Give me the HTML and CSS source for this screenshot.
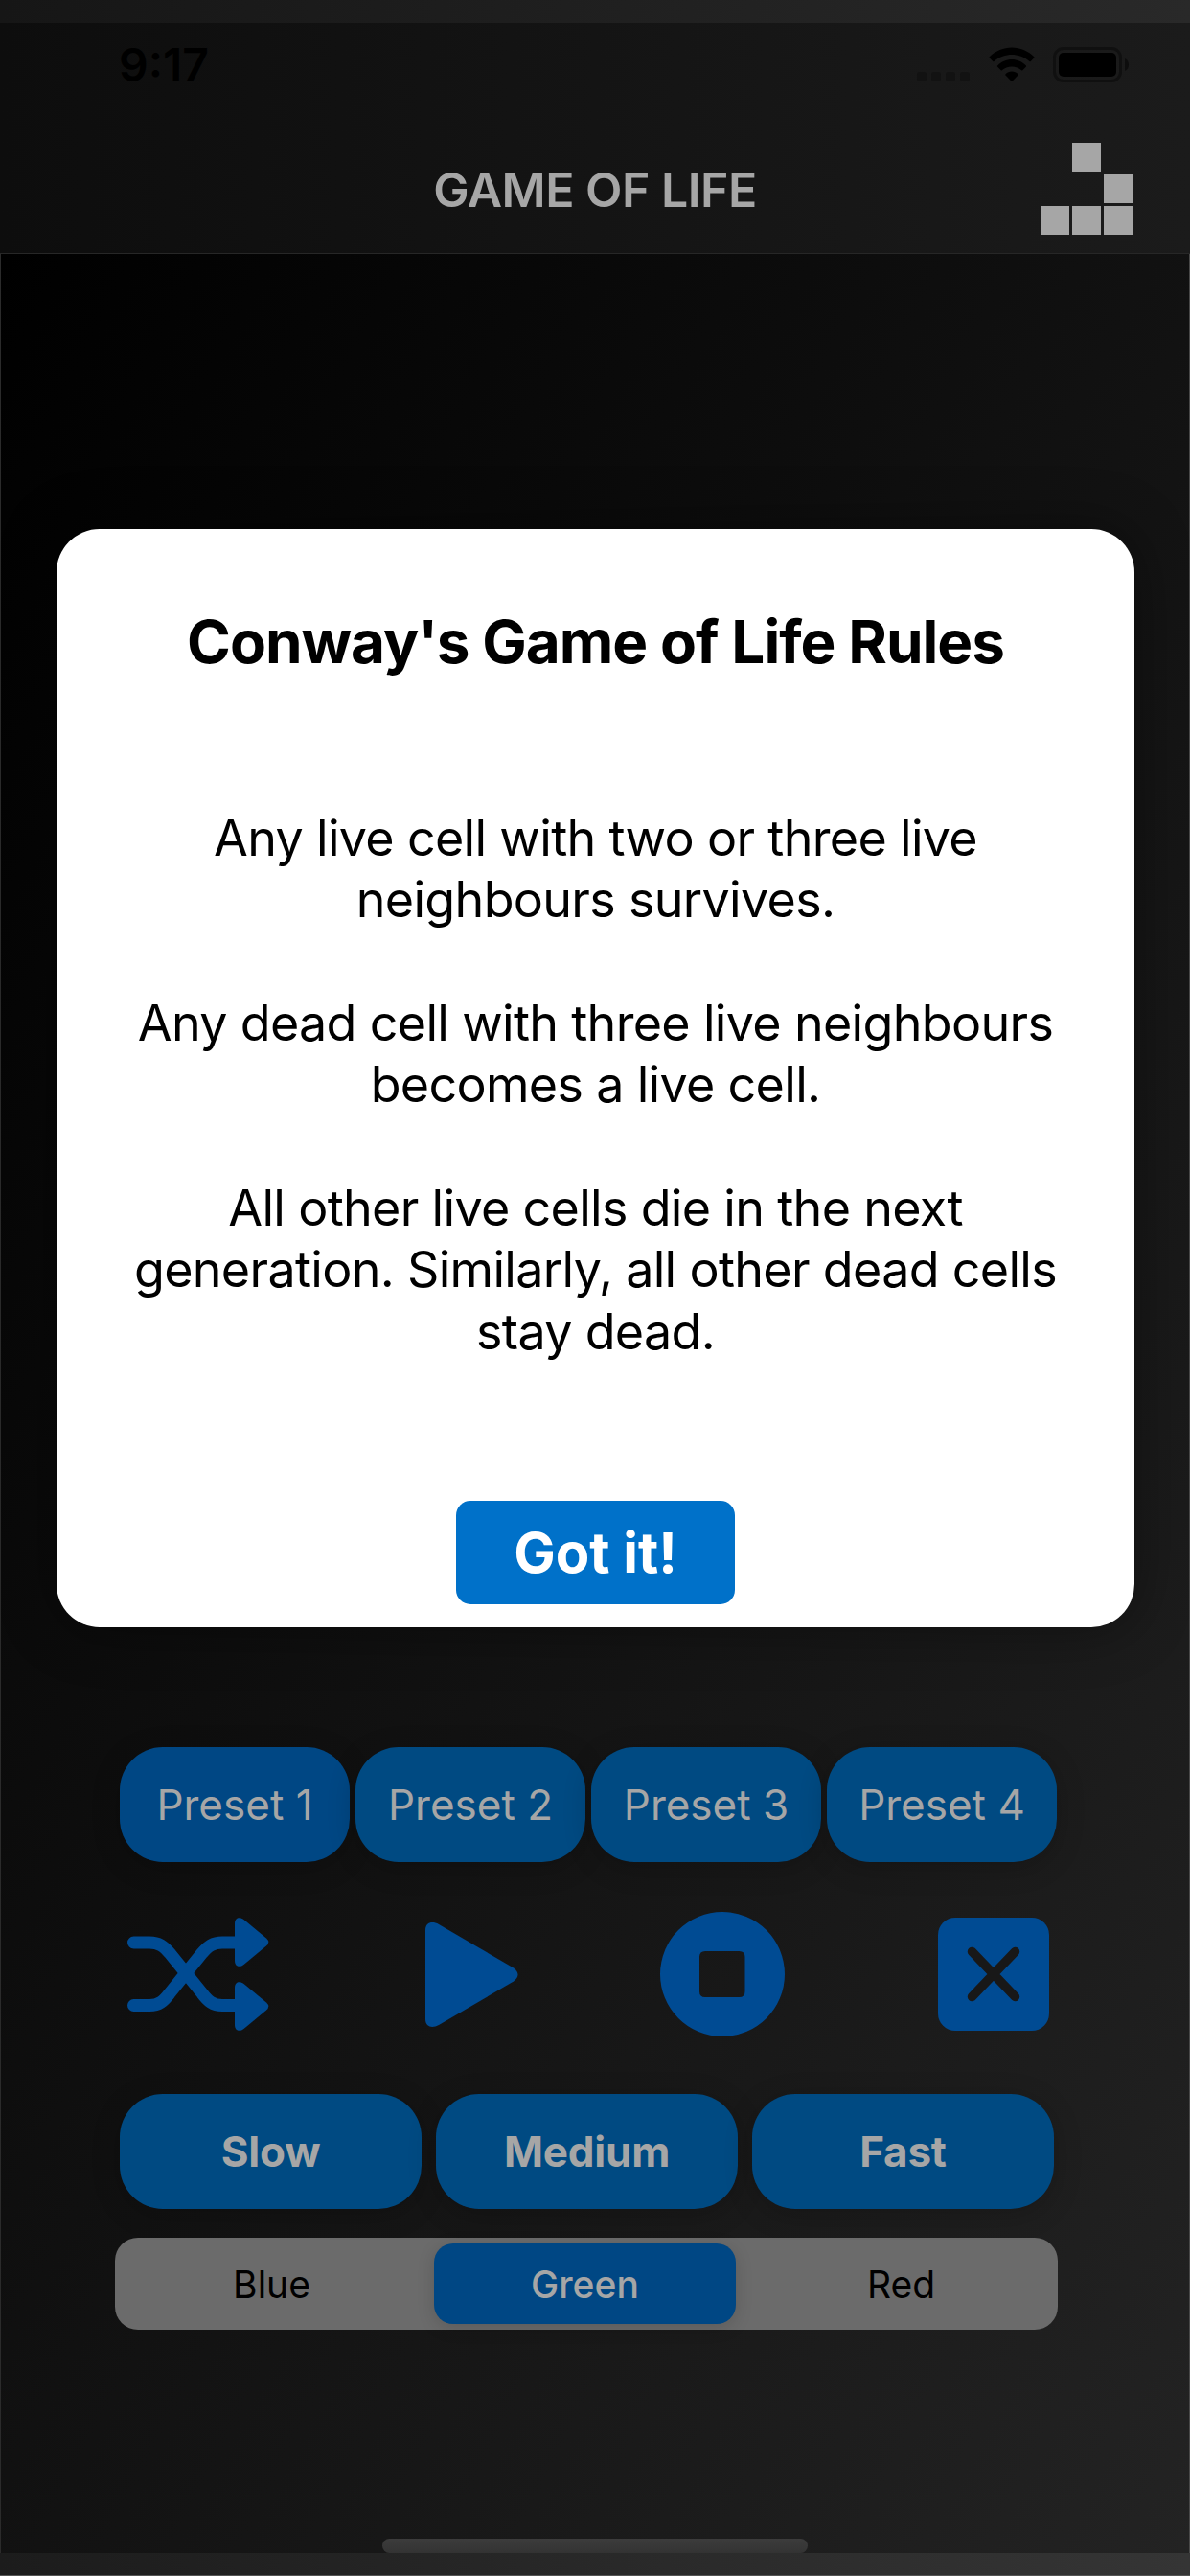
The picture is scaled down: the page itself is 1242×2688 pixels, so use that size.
FILE: index.html
```html
<!DOCTYPE html>
<html lang="en">
<head>
<meta charset="utf-8">
<title>Game of Life</title>
<link rel="stylesheet" href="styles.css">
</head>
<body>
<div class="screen">
  <div class="edge edge-top"></div>
  <header class="header">
    <div class="status">
      <span class="time">9:17</span>
      <div class="status-icons">
        <svg class="signal" viewBox="0 0 55 10"><rect width="10" height="10" rx="3"/><rect x="15" width="10" height="10" rx="3"/><rect x="30" width="10" height="10" rx="3"/><rect x="45" width="10" height="10" rx="3"/></svg>
        <svg class="wifi" viewBox="0 0 48 37"><path d="M24 8C30 8 37.500 10.500 42.700 15.200Q43.300 15.500 43.800 15L47.300 11.300Q47.800 10.700 47.300 10.200C41 4 32.500 .5 24 .5S7 4 .7 10.200Q.2 10.700 .7 11.300L4.200 15Q4.700 15.500 5.300 15.200C10.500 10.500 18 8 24 8Z"/><path d="M24 20.500C28 20.500 31.500 22 34.200 24.300Q34.800 24.700 35.300 24.200L39 20.500Q39.400 20 38.900 19.400C35 15.300 29.500 13 24 13S13 15.300 9.100 19.400Q8.600 20 9 20.500L12.700 24.200Q13.200 24.700 13.800 24.300C16.500 22 20 20.500 24 20.500Z"/><path d="M24 25.500C26.500 25.500 28.800 26.400 30.500 28.200Q31 28.800 30.500 29.400L24.700 35.500Q24 36.200 23.300 35.500L17.500 29.400Q17 28.800 17.500 28.200C19.200 26.400 21.500 25.500 24 25.500Z"/></svg>
        <svg class="battery" viewBox="0 0 79 37"><rect x="1.500" y="1.500" width="69" height="34" rx="9.500" fill="none" stroke="#101010" stroke-width="3"/><rect x="6" y="6" width="60" height="25" rx="5"/><path d="M75 12Q79 14 79 18.500T75 25Z" fill="#0d0d0d"/></svg>
      </div>
    </div>
    <div class="navbar">
      <h1 class="nav-title">GAME OF LIFE</h1>
      <div class="glider"><i class="cell c1"></i><i class="cell c2"></i><i class="cell c3"></i><i class="cell c4"></i><i class="cell c5"></i></div>
    </div>
  </header>
  <main class="game">
    <div class="board"></div>
    <div class="row presets">
      <button class="pill">Preset 1</button>
      <button class="pill">Preset 2</button>
      <button class="pill">Preset 3</button>
      <button class="pill">Preset 4</button>
    </div>
    <div class="row tools">
      <svg class="tool shuffle" viewBox="0 0 148 118"><g fill="none" stroke="#004b93" stroke-width="13" stroke-linecap="round"><path d="M6.500 26H23C33 26 38 30 44 37L78 79C84 87 89 91.500 99 91.500H114"/><path d="M6.500 91.500H23C33 91.500 38 87 44 79L78 37C84 30 89 26 99 26H114"/></g><path d="M112 6C112 0 117-1.500 121.500 2L145 21.500Q149.500 25.500 145 29.500L121.500 49C117 52.500 112 51 112 45Z"/><path d="M112 73C112 67 117 65.500 121.500 69L145 88.500Q149.500 92.500 145 96.500L121.500 116C117 119.500 112 118 112 112Z"/></svg>
      <svg class="tool play" viewBox="0 0 97 109"><path d="M0 8C0 0 7-2 14 2L92 47.500Q101 54.500 92 61.500L14 107C7 111 0 109 0 101Z"/></svg>
      <svg class="tool stop" viewBox="0 0 130 130"><path fill-rule="evenodd" d="M65 0A65 65 0 1 1 65 130A65 65 0 1 1 65 0ZM47 41Q41 41 41 47V83Q41 89 47 89H82.500Q88.500 89 88.500 83V47Q88.500 41 82.500 41Z"/></svg>
      <svg class="tool clear" viewBox="0 0 116 118"><rect width="116" height="118" rx="18"/><path d="M35.500 35.500L80.500 82.500M80.500 35.500L35.500 82.500" stroke="#181818" stroke-width="9.500" stroke-linecap="round"/></svg>
    </div>
    <div class="row speeds">
      <button class="pill speed">Slow</button>
      <button class="pill speed">Medium</button>
      <button class="pill speed">Fast</button>
    </div>
    <div class="segments">
      <button class="segment">Blue</button>
      <button class="segment selected">Green</button>
      <button class="segment">Red</button>
    </div>
    <div class="home"></div>
  </main>
  <div class="edge edge-bottom"></div>
  <section class="dialog">
    <h2 class="dialog-title">Conway's Game of Life Rules</h2>
    <div class="rules">
      <p>Any live cell with two or three live<br>neighbours survives.</p>
      <p>Any dead cell with three live neighbours<br>becomes a live cell.</p>
      <p>All other live cells die in the next<br>generation. Similarly, all other dead cells<br>stay dead.</p>
    </div>
    <button class="confirm">Got it!</button>
  </section>
</div>
</body>
</html>
```
FILE: styles.css
```css
* { box-sizing: border-box; }
body { margin: 0; background: #000; font-family: Inter, "Liberation Sans", sans-serif; }
h1, h2, p { margin: 0; }
button { border: 0; padding: 0; margin: 0; font-family: inherit; }
svg { display: block; }

.screen {
  position: relative;
  width: 1242px;
  height: 2688px;
  display: flex;
  flex-direction: column;
  overflow: hidden;
}
.edge { height: 24px; flex: none; }
.edge-top { background: linear-gradient(90deg, #161616, #292929); }
.edge-bottom { background: linear-gradient(90deg, #1c1c1c, #353535); border-bottom: 1px solid #555; }

.header {
  height: 241px;
  flex: none;
  background: linear-gradient(90deg, #0d0d0d, #1b1b1b);
  border-bottom: 1px solid #272727;
}
.status {
  height: 98px;
  display: flex;
  justify-content: space-between;
  padding: 0 64px 0 124px;
}
.time { font-size: 48px; font-weight: 600; line-height: 58px; padding-top: 15px; color: #000; }
.status-icons { display: flex; padding-top: 25px; }
.signal { width: 55px; height: 10px; margin: 26px 20px 0 0; fill: #121212; }
.wifi { width: 48px; height: 37px; margin-right: 19px; }
.battery { width: 79px; height: 37px; }
.navbar { display: flex; justify-content: center; position: relative; height: 142px; }
.nav-title { font-size: 50px; font-weight: 600; line-height: 60px; padding-top: 46px; letter-spacing: -.5px; color: #a6a6a6; }
.glider {
  position: absolute;
  right: 60px;
  top: 27px;
  display: grid;
  grid: repeat(3, 30px) / repeat(3, 30px);
  gap: 3px;
}
.cell { background: #a6a6a6; }
.c1 { grid-area: 1 / 2; }
.c2 { grid-area: 2 / 3; }
.c3 { grid-area: 3 / 1; }
.c4 { grid-area: 3 / 2; }
.c5 { grid-area: 3 / 3; }

.game {
  flex: 1;
  display: flex;
  flex-direction: column;
  border-left: 1px solid #2b2b2b;
  border-right: 1px solid #484848;
  background: linear-gradient(to bottom right, #000, #232323);
}
.board { height: 1558px; flex: none; }
.row { display: flex; margin-left: 124px; }
.presets { gap: 6px; }
.pill {
  width: 240px;
  height: 120px;
  border-radius: 45px;
  background: #004a82;
  color: #a6a6a6;
  font-size: 44px;
  box-shadow: 0 6px 30px rgba(0, 0, 0, .2);
}
.presets .pill:first-child { background: #004784; }
.tools { height: 130px; margin: 52px 0 60px 132px; align-items: center; }
.tool { fill: #004b93; }
.shuffle { width: 148px; height: 118px; }
.play { width: 97px; height: 109px; margin-left: 163px; }
.stop { width: 130px; height: 130px; margin-left: 148px; }
.clear { width: 116px; height: 118px; margin-left: 160px; }
.speeds { gap: 15px; }
.speed { width: 315px; font-weight: 700; letter-spacing: -.2px; }
.segments {
  display: flex;
  width: 984px;
  height: 96px;
  margin: 30px 0 0 119px;
  padding: 6px;
  justify-content: space-between;
  border-radius: 24px;
  background: #6b6b6b;
}
.segment { width: 315px; background: none; border-radius: 20px; font-size: 39px; color: #000; }
.selected { margin-right: 3px; background: #004784; color: #a6a6a6; font-weight: 500; box-shadow: 0 4px 18px rgba(0, 0, 0, .15); }
.home {
  width: 444px;
  height: 15px;
  margin: auto auto 0;
  border-radius: 8px;
  background: linear-gradient(#3c3c3c, #333);
}

.dialog {
  position: absolute;
  left: 59px;
  top: 552px;
  width: 1125px;
  height: 1146px;
  border-radius: 45px;
  background: #fff;
  color: #000;
  display: flex;
  flex-direction: column;
  align-items: center;
  text-align: center;
  box-shadow: 0 0 60px rgba(0, 0, 0, .4);
}
.dialog-title { font-size: 62px; font-weight: 700; line-height: 76px; padding-top: 80px; letter-spacing: -1px; }
.rules {
  margin-top: 134.5px;
  display: flex;
  flex-direction: column;
  gap: 64.4px;
  font-size: 52px;
  line-height: 64.4px;
  letter-spacing: -.68px;
  white-space: nowrap;
}
.confirm { width: 291px; height: 108px; margin: auto 0 24px; border-radius: 15px; background: #0071c9; color: #fff; font-size: 58px; font-weight: 700; }
```
